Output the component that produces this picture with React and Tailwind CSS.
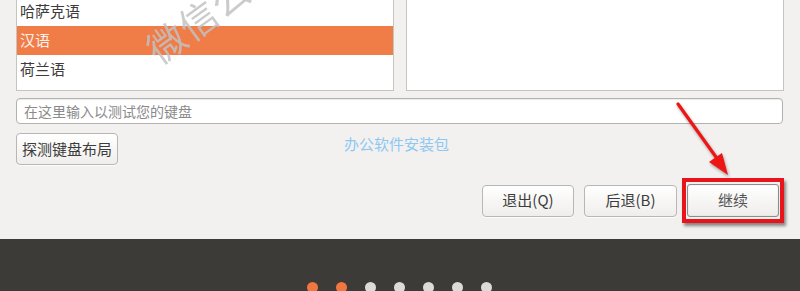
import React from 'react';

const font = { fontFamily: '"Noto Sans CJK SC", "Noto Sans", sans-serif' };

const languages = ['哈萨克语', '汉语', '荷兰语'];

const Button = ({ children, className = '' }) => (
  <button
    className={`h-[32px] rounded-[4px] border border-[#b9b7b3] bg-gradient-to-b from-[#ffffff] to-[#efeeec] text-[15px] text-[#3c3c3c] shadow-[0_1px_0_rgba(255,255,255,0.8)] ${className}`}
  >
    {children}
  </button>
);

const App = () => {
  return (
    <div className="relative w-[800px] h-[291px] overflow-hidden bg-[#f2f1f0]" style={font}>
      <div className="h-[239px] px-[16px]">
        <div className="flex gap-[12px] h-[91px]">
          <div className="w-[378px] h-full overflow-hidden bg-white border-x border-b border-[#c6c4c0]">
            <div className="-mt-[3px]">
              {languages.map((lang, i) => (
                <div
                  key={lang}
                  className={`h-[29px] flex items-center px-[3px] text-[15px] ${
                    i === 1 ? 'bg-[#f07c47] text-[#fdf1ea]' : 'text-[#3c3c3c]'
                  }`}
                >
                  {lang}
                </div>
              ))}
            </div>
          </div>
          <div className="w-[379px] h-full bg-white border-x border-b border-[#c6c4c0]" />
        </div>

        <div className="mt-[7px] w-[767px] h-[26px] rounded-[4px] border border-[#b4b2ae] bg-white shadow-[inset_0_1px_1px_rgba(0,0,0,0.08)] flex items-center px-[7px] text-[14px] text-[#8a8a8a]">
          在这里输入以测试您的键盘
        </div>

        <div className="mt-[9px] flex">
          <Button className="w-[102px]">探测键盘布局</Button>
        </div>

        <div className="mt-[13px] flex items-center justify-end">
          <Button className="w-[92px]">退出(Q)</Button>
          <Button className="w-[93px] ml-[10px]">后退(B)</Button>
          <div className="ml-[5px] w-[102px] h-[45px] border-[4px] border-[#e8141b] p-[1px] pt-[2px] shadow-[2px_3px_3px_rgba(0,0,0,0.45)] flex">
            <button className="w-full h-[33px] rounded-[3px] border border-[#8f8d8a] bg-gradient-to-b from-[#ffffff] to-[#eeedeb] text-[15px] text-[#555555] shadow-[inset_0_0_1px_rgba(0,0,0,0.3)]">
              继续
            </button>
          </div>
        </div>
      </div>

      <div className="h-[52px] bg-[#3c3b37] flex justify-center pt-[43px]">
        <div className="flex gap-[18px] -ml-[2px]">
          {[0, 1, 2, 3, 4, 5, 6].map((i) => (
            <span
              key={i}
              className={`w-[11px] h-[11px] rounded-full ${i < 2 ? 'bg-[#f0773f]' : 'bg-[#dcdbd9]'}`}
            />
          ))}
        </div>
      </div>

      <div className="absolute left-[344px] top-[133px] text-[15px] text-[#8ec8f2]">办公软件安装包</div>

      <div className="absolute left-[150px] top-[-26px] text-[38px] text-[#c2c2c2] opacity-85 origin-left -rotate-[36deg] tracking-[1px] translate-y-[50px]">
        微信公众号
      </div>

      <svg className="absolute left-0 top-0 pointer-events-none" width="800" height="291">
        <g style={{ filter: 'drop-shadow(1px 2px 1.5px rgba(0,0,0,0.35))' }}>
          <line x1="678" y1="104" x2="716" y2="157" stroke="#ee1515" strokeWidth="3.2" strokeLinecap="round" />
          <polygon points="728,175 709,162 716,157 722,153" fill="#ee1515" />
        </g>
      </svg>
    </div>
  );
};

export default App;
